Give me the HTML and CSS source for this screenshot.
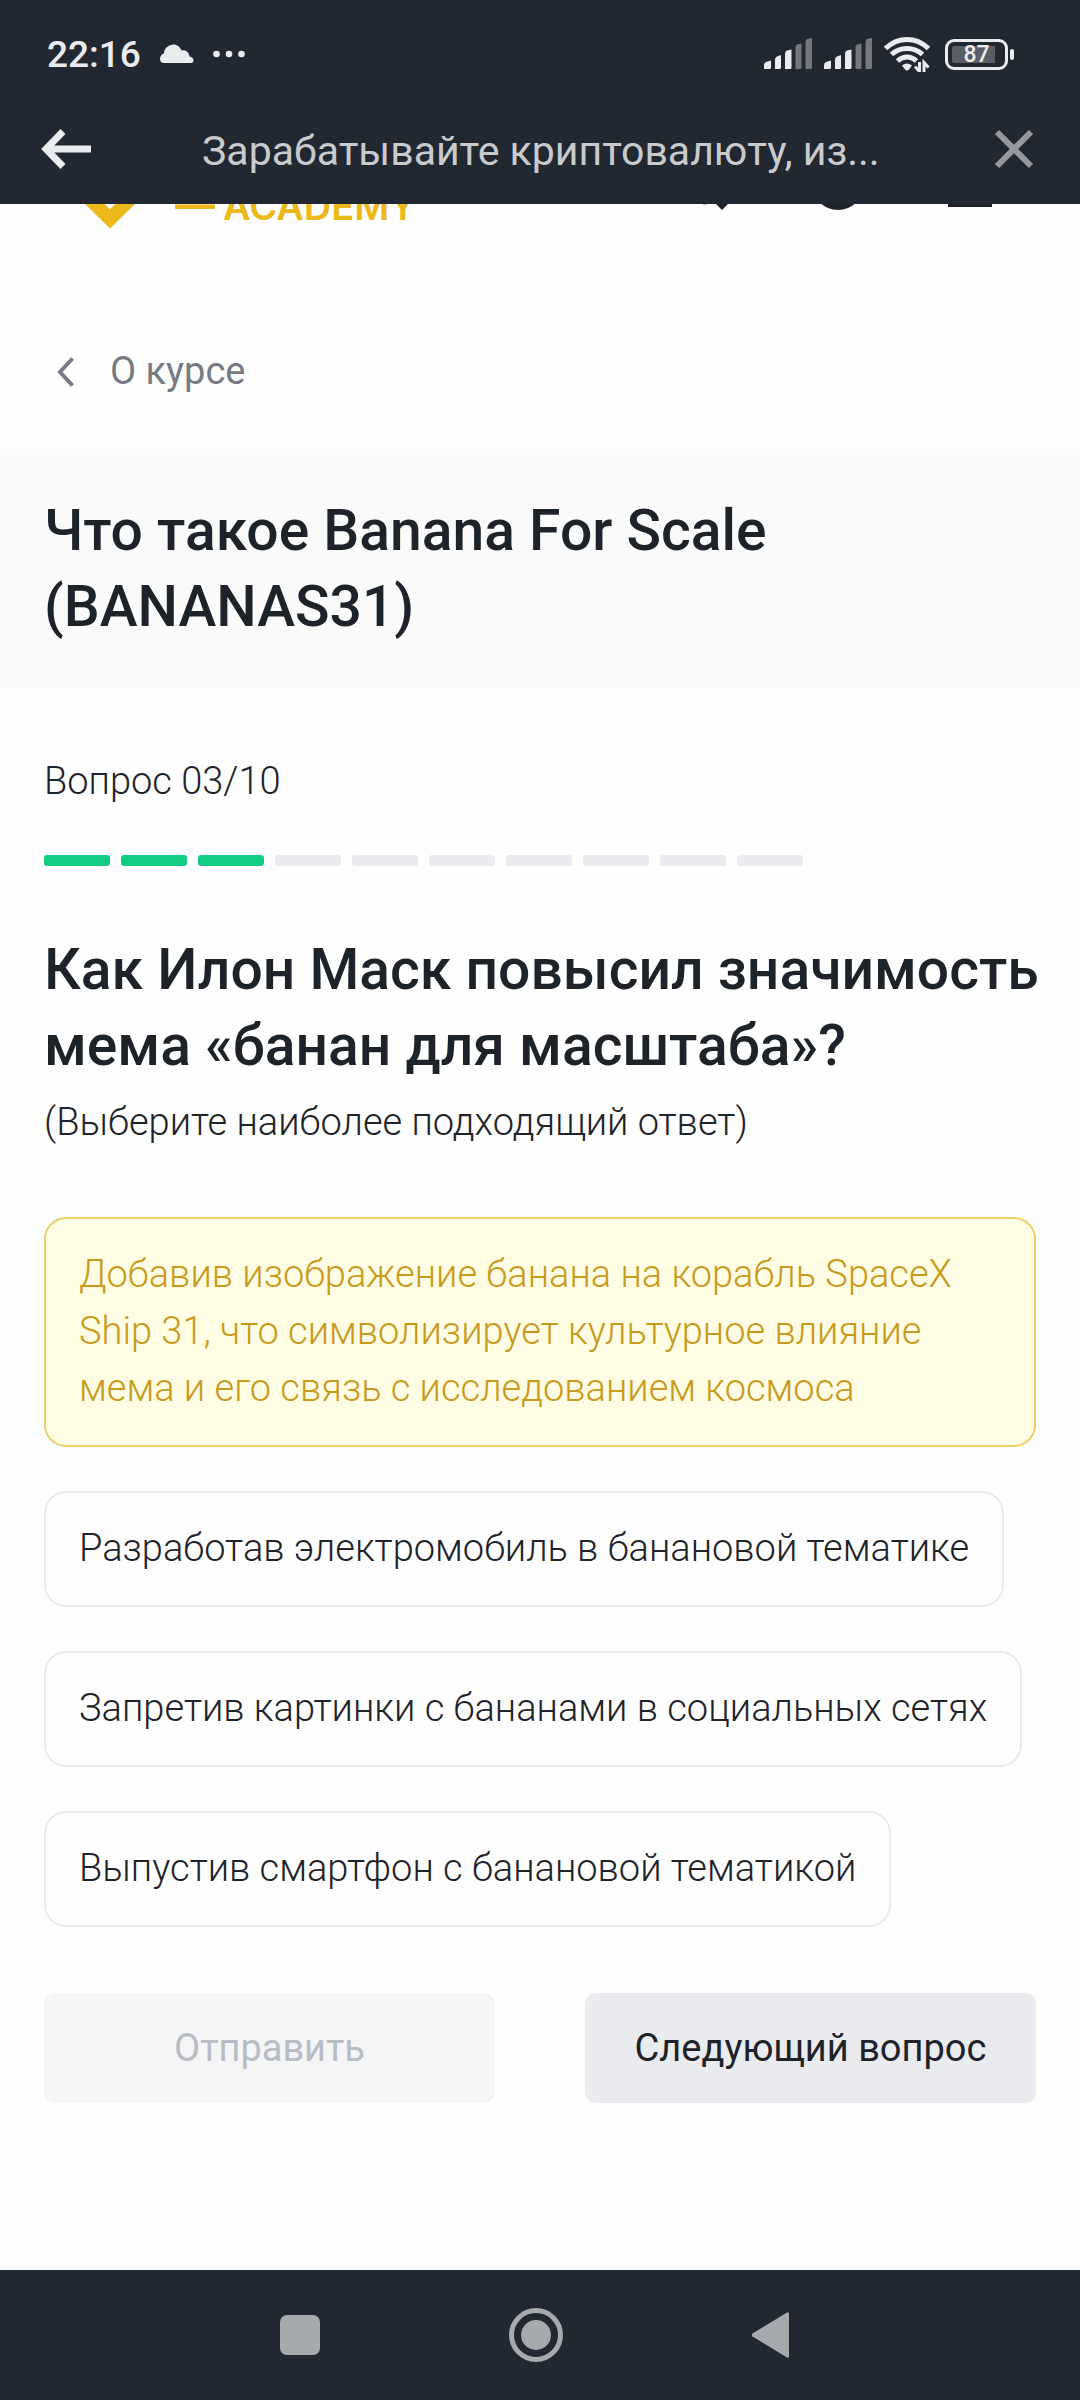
FILE: index.html
```html
<!DOCTYPE html>
<html lang="ru">
<head>
    <meta charset="UTF-8">
    <meta name="viewport" content="width=device-width, initial-scale=1.0">
    <title>Что такое Banana For Scale (BANANAS31)</title>
    <link rel="stylesheet" href="styles.css">
</head>
<body>
    <div class="status-bar">
        <div class="status-left">
            <span class="clock">22:16</span>
            <svg class="cloud" width="34" height="20" viewBox="0 0 34 20" fill="currentColor">
                <path d="M4 19C1 19 0 17 0 14.500C0 12 2 10 4 9.600C4 4 9 0.500 13.500 0.500C17 0.500 20 2.800 21.500 6.500C25.500 5.500 29 8 29.500 12.500C32 13 33.500 14.500 33.500 16.500C33.500 18 32.500 19 31 19Z"/>
            </svg>
            <svg width="32" height="8" viewBox="0 0 32 8" fill="currentColor">
                <circle cx="3.500" cy="4" r="3.300"/>
                <circle cx="16" cy="4" r="3.300"/>
                <circle cx="28.500" cy="4" r="3.300"/>
            </svg>
        </div>
        <div class="status-right">
            <svg class="signal" width="48" height="32" viewBox="0 0 48 32" fill="currentColor">
                <path d="M0 31V27Q0 25 2 24L7 22.500V29.500Q7 31 5.500 31Z"/>
                <path d="M11 31V21.500Q11 19.500 13 18.500L17 17V29.500Q17 31 15.500 31Z"/>
                <path d="M21 31V15.500Q21 13.500 23 12.500L27.500 11.500V29.500Q27.500 31 26 31Z"/>
                <path class="off" d="M31.500 31V9.500Q31.500 7.500 33 6.500L37.500 5.500V29.500Q37.500 31 36 31Z"/>
                <path class="off" d="M41.500 31V4.500Q41.500 2 43 1L48 0V29.500Q48 31 46.500 31Z"/>
            </svg>
            <svg class="signal" width="48" height="32" viewBox="0 0 48 32" fill="currentColor">
                <path d="M0 31V27Q0 25 2 24L7 22.500V29.500Q7 31 5.500 31Z"/>
                <path d="M11 31V21.500Q11 19.500 13 18.500L17 17V29.500Q17 31 15.500 31Z"/>
                <path d="M21 31V15.500Q21 13.500 23 12.500L27.500 11.500V29.500Q27.500 31 26 31Z"/>
                <path class="off" d="M31.500 31V9.500Q31.500 7.500 33 6.500L37.500 5.500V29.500Q37.500 31 36 31Z"/>
                <path class="off" d="M41.500 31V4.500Q41.500 2 43 1L48 0V29.500Q48 31 46.500 31Z"/>
            </svg>
            <svg class="wifi" width="46" height="36" viewBox="0 0 46 36" fill="none" stroke="currentColor" stroke-width="5">
                <path d="M1.500 12.500Q11 3.500 23 3.500T44.500 12.500"/>
                <path d="M7.500 18.500Q14 12.500 23 12.500T38.500 18.500"/>
                <path d="M13.500 25Q18 21 23 21T32.500 25"/>
                <path d="M18 29.500Q23 25.500 28 29.500L25 33.500Q23 35.500 21 33.500Z" fill="currentColor" stroke="none"/>
                <path d="M35.500 26V35.500L31 30.500M40 36V26.500L44.500 31.500" stroke-width="3"/>
            </svg>
            <div class="battery"><span>87</span></div>
        </div>
    </div>

    <div class="app-bar">
        <button class="icon-button back" aria-label="Назад">
            <svg width="50" height="40" viewBox="0 0 50 40" fill="none" stroke="currentColor" stroke-width="7">
                <path d="M22 2.500L5 20L22 37.500M5 20H50"/>
            </svg>
        </button>
        <div class="page-name">Зарабатывайте криптовалюту, из...</div>
        <button class="icon-button close" aria-label="Закрыть">
            <svg width="40" height="40" viewBox="0 0 40 40" fill="none" stroke="currentColor" stroke-width="6">
                <path d="M3 3L37 37M37 3L3 37"/>
            </svg>
        </button>
    </div>

    <!-- site header, mostly scrolled under the app bar -->
    <header class="site-header">
        <svg class="logo" width="130" height="26" viewBox="0 0 130 26" fill="currentColor">
            <path d="M0 0H19.500L25 5L30.500 0H50L25 24.500Z"/>
            <path d="M90 0.500H130V5H90Z"/>
        </svg>
        <span class="logo-text">ACADEMY</span>
        <svg class="header-icons" width="292" height="26" viewBox="0 0 292 26" fill="currentColor">
            <path d="M0 0H4V1H0Z" opacity="0.300"/>
            <path d="M13 0H25L19 6Z"/>
            <circle cx="135" cy="-20" r="26"/>
            <path d="M245 0H289V3H245Z"/>
        </svg>
    </header>

    <a class="breadcrumb" href="#course">
        <svg width="17" height="30" viewBox="0 0 17 30" fill="none" stroke="currentColor" stroke-width="4">
            <path d="M15.500 1.500L3 15L15.500 28.500"/>
        </svg>
        О курсе
    </a>

    <div class="course-title">
        <h1>Что такое Banana For Scale (BANANAS31)</h1>
    </div>

    <main class="quiz">
        <p class="counter">Вопрос 03/10</p>
        <div class="steps">
            <span class="step done"></span>
            <span class="step done"></span>
            <span class="step done"></span>
            <span class="step"></span>
            <span class="step"></span>
            <span class="step"></span>
            <span class="step"></span>
            <span class="step"></span>
            <span class="step"></span>
            <span class="step"></span>
        </div>

        <h2>Как Илон Маск повысил значимость мема «банан для масштаба»?</h2>
        <p class="hint">(Выберите наиболее подходящий ответ)</p>

        <div class="answers" role="radiogroup">
            <label class="answer">
                <input type="radio" name="answer" value="1" checked>
                Добавив изображение банана на корабль SpaceX Ship 31, что символизирует культурное влияние мема и его связь с исследованием космоса
            </label>
            <label class="answer">
                <input type="radio" name="answer" value="2">
                Разработав электромобиль в банановой тематике
            </label>
            <label class="answer">
                <input type="radio" name="answer" value="3">
                Запретив картинки с бананами в социальных сетях
            </label>
            <label class="answer">
                <input type="radio" name="answer" value="4">
                Выпустив смартфон с банановой тематикой
            </label>
        </div>

        <div class="actions">
            <button class="button" disabled>Отправить</button>
            <button class="button next">Следующий вопрос</button>
        </div>
    </main>

    <nav class="system-nav">
        <button class="icon-button" aria-label="Недавние">
            <svg width="56" height="56" viewBox="0 0 56 56" fill="currentColor">
                <rect x="8" y="8" width="40" height="40" rx="7"/>
            </svg>
        </button>
        <button class="icon-button" aria-label="Домой">
            <svg width="56" height="56" viewBox="0 0 56 56" fill="currentColor">
                <circle cx="28" cy="28" r="24.500" fill="none" stroke="currentColor" stroke-width="5"/>
                <circle cx="28" cy="28" r="15"/>
            </svg>
        </button>
        <button class="icon-button" aria-label="Назад">
            <svg width="56" height="56" viewBox="0 0 56 56" fill="currentColor">
                <path d="M8.500 26.500L43 5.500Q45 4.500 45 7V49Q45 51.500 43 50.500L8.500 29.500Q7 28 8.500 26.500Z"/>
            </svg>
        </button>
    </nav>
</body>
</html>
```
FILE: styles.css
```css
* {
    box-sizing: border-box;
}

body {
    margin: 0;
    min-height: 100vh;
    display: flex;
    flex-direction: column;
    font-family: Roboto, 'Noto Sans', sans-serif;
    font-size: 38px;
    font-weight: 300;
    line-height: 57px;
    color: #1e2329;
    background: #fefefe;
}

svg {
    display: block;
    flex: none;
}

h1, h2, p {
    margin: 0;
}

h1, h2 {
    font-size: 57px;
    font-weight: 500;
    line-height: 76px;
}

button {
    font: inherit;
    color: inherit;
    border: none;
    cursor: pointer;
}

.icon-button {
    flex: none;
    padding: 0;
    background: none;
}

/* Phone bars */
.status-bar {
    display: flex;
    justify-content: space-between;
    align-items: center;
    height: 108px;
    padding: 0 72px 0 47px;
    background: #212832;
    color: #ebecf0;
}

.status-left,
.status-right {
    display: flex;
    align-items: center;
}

.clock {
    font-size: 37px;
    font-weight: 500;
}

.cloud {
    margin: 0 19px;
}

.signal {
    margin-right: 12px;
}

.signal .off {
    fill: #74777c;
}

.wifi {
    margin-right: 15px;
}

.battery {
    position: relative;
    width: 63px;
    height: 31px;
    padding: 4px;
    border: 3px solid #ebecf0;
    border-radius: 9px;
    background: linear-gradient(to right, #5b5d65 87%, transparent 87%) content-box;
    font-size: 23px;
    font-weight: 500;
    line-height: 17px;
    text-align: center;
}

.battery::after {
    content: '';
    position: absolute;
    top: 7px;
    right: -9px;
    width: 4px;
    height: 11px;
    border-radius: 2px;
    background: #ebecf0;
}

.app-bar {
    display: flex;
    align-items: center;
    height: 96px;
    padding: 0 46px 14px 41px;
    background: #212832;
    color: #c9cace;
}

.back {
    color: #ebecf0;
}

.close {
    color: #96989d;
}

.page-name {
    flex: 1;
    margin: 4px 100px 0 111px;
    font-size: 41px;
    font-weight: 400;
    white-space: nowrap;
}

/* Site header */
.site-header {
    display: flex;
    align-items: flex-end;
    height: 26px;
    padding: 0 85px;
    overflow: hidden;
}

.logo {
    color: #ebb91a;
}

.logo-text {
    margin-left: 8px;
    font-family: Inter, sans-serif;
    font-size: 38px;
    font-weight: 600;
    line-height: 47px;
    color: #ebb91a;
}

.header-icons {
    margin-left: auto;
}

.breadcrumb {
    display: flex;
    align-items: center;
    gap: 36px;
    padding: 113px 57px 49px;
    font-weight: 400;
    color: #767b83;
    text-decoration: none;
}

.course-title {
    padding: 44px 44px 43px;
    background: #fafafa;
}

/* Quiz */
.quiz {
    flex: 1;
    padding: 65px 44px;
}

.quiz h2 {
    margin-right: -16px;
}

.steps {
    display: flex;
    gap: 11px;
    max-width: 759px;
    margin: 45px 0 66px;
}

.step {
    flex: 1;
    height: 11px;
    border-radius: 3px;
    background: #eaebef;
}

.step.done {
    background: #11cc83;
}

.hint {
    margin-top: 10px;
}

.answers {
    display: flex;
    flex-direction: column;
    align-items: flex-start;
    gap: 44px;
    margin: 66px 0;
}

.answer {
    padding: 27px 33px 28px;
    border: 2px solid #eaebef;
    border-radius: 22px;
    cursor: pointer;
}

.answer input {
    position: absolute;
    opacity: 0;
}

.answer:has(input:checked) {
    border-color: #ebd068;
    background: #fffde3;
    color: #c99a1c;
}

.actions {
    display: grid;
    grid-template-columns: 1fr 1fr;
    gap: 90px;
}

.button {
    height: 110px;
    padding: 0;
    border-radius: 11px;
    background: #eaebef;
    font-weight: 400;
}

.button:disabled {
    background: #f5f5f5;
    color: #b7bdc6;
    cursor: default;
}

.system-nav {
    display: flex;
    justify-content: center;
    align-items: center;
    gap: 180px;
    height: 130px;
    padding-right: 8px;
    background: #212832;
    color: #a6a9ae;
}
```
